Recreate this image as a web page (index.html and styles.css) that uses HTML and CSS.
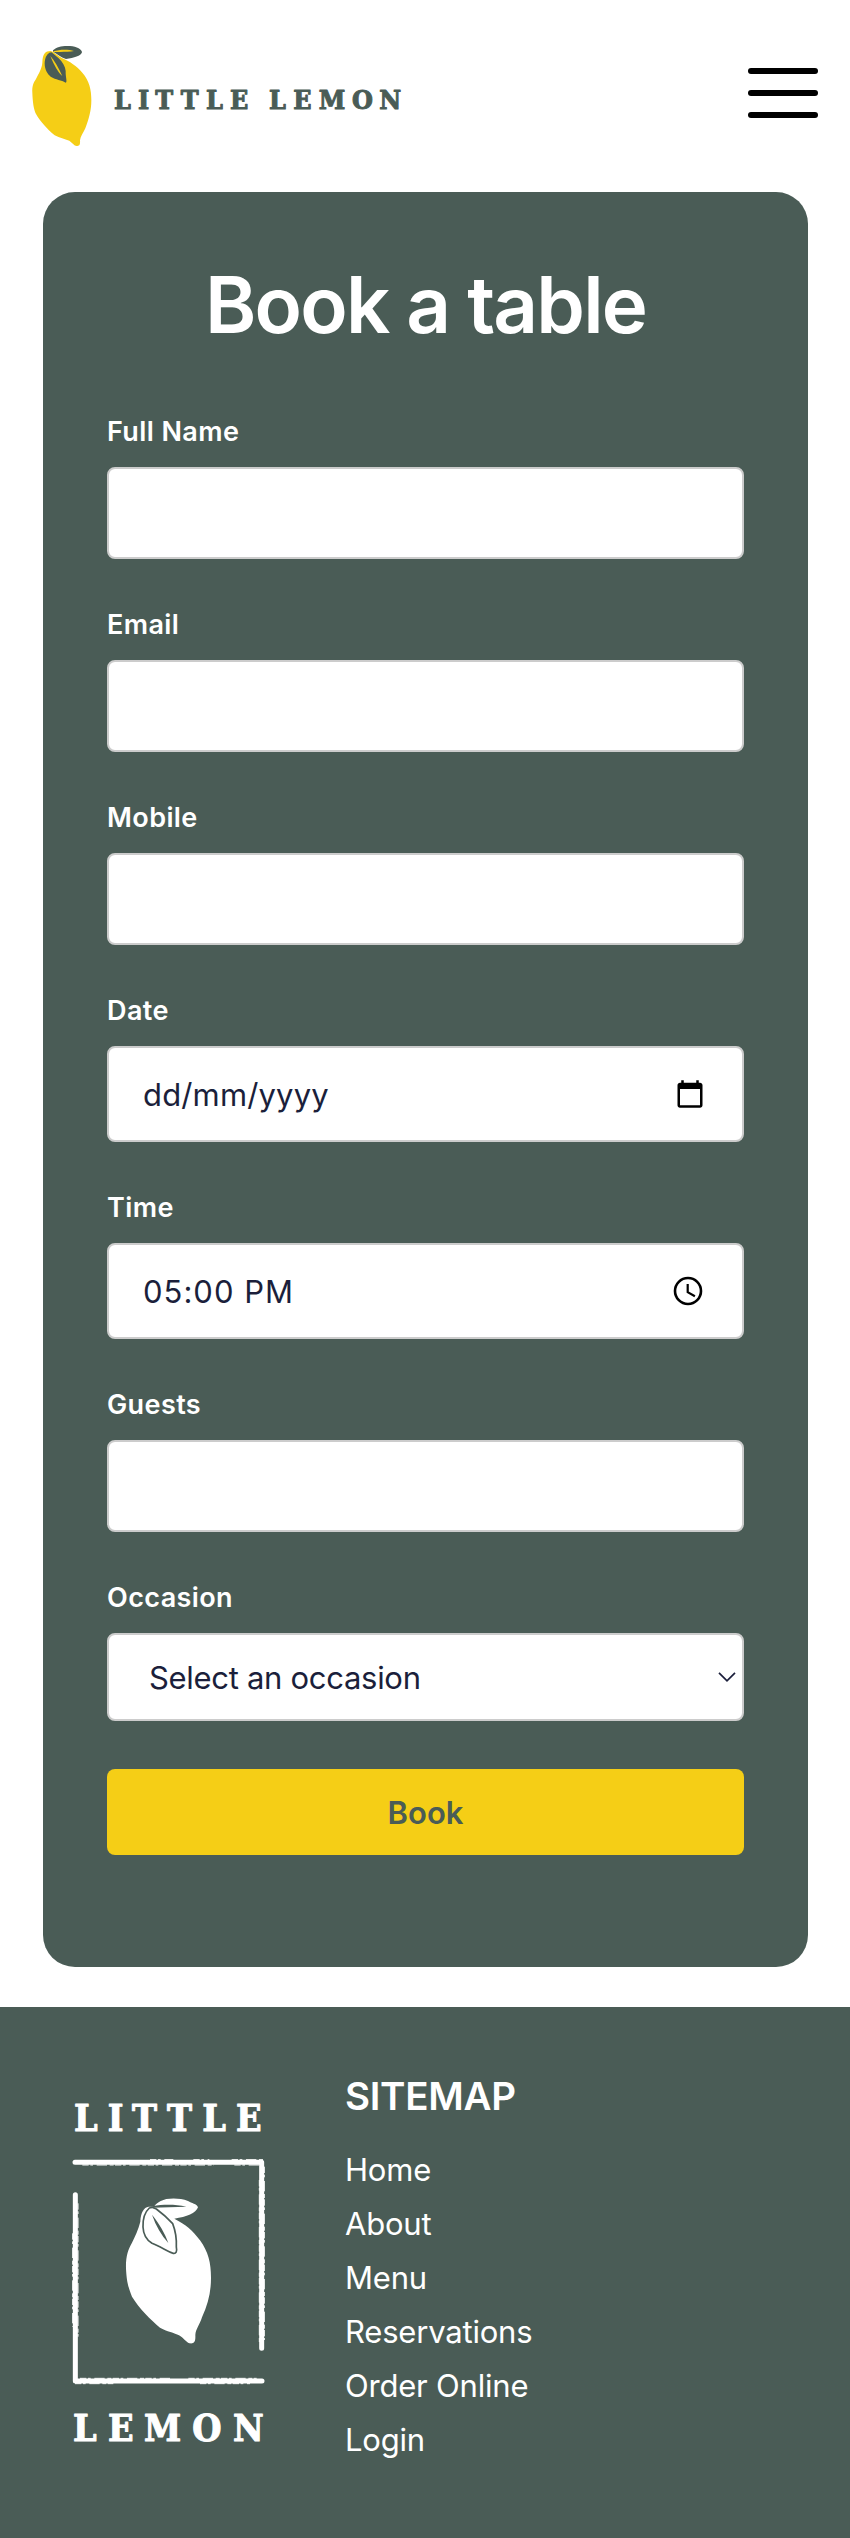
FILE: index.html
```html
<!DOCTYPE html>
<html lang="en">
<head>
<meta charset="utf-8">
<title>Little Lemon</title>
<link rel="stylesheet" href="styles.css">
</head>
<body>
<header class="header">
  <svg class="logo" viewBox="0 0 1290 450" role="img">
    <path class="yellow" d="M152 93 C136 93 128 101 127 128 C125 148 116 160 108 177 C100 188 96 199 97 218 C98 246 101 268 108 282 C120 303 142 328 164 346 C180 354 193 357 208 362 C217 368 222 377 230 378 C239 379 241 373 240 361 C241 350 250 338 256 325 C267 296 274 271 274 241 C274 207 268 183 247 158 C230 138 210 124 184 113 L158 95Z"/>
    <path class="green" d="M159 91 C172 80 185 77 210 78 C231 80 246 88 246 97 C243 108 222 114 198 117 C182 112 171 101 159 95Z"/>
    <path class="green" d="M148 98 C139 105 135 113 134 130 C134 150 143 163 152 170 C168 180 184 179 197 188 C203 188 196 168 197 153 C196 139 187 126 176 115 C166 107 158 100 155 97Z"/>
    <path class="yellow" d="M160 94 C180 87 207 88 222 93 C204 97 180 95 160 96Z M151 108 C162 119 178 148 187 168 C174 157 163 137 151 108Z"/>
    <g class="wordmark green" font-size="80">
      <text y="267" x="342 414 466 542 618 690 767 807 880 956 1056 1138">LITTLE LEMON</text>
    </g>
  </svg>
  <button class="menu" aria-label="Menu"><span class="bar"></span><span class="bar"></span><span class="bar"></span></button>
</header>
<main class="card">
  <h1 class="title">Book a table</h1>
  <form class="form">
    <div class="field"><label class="label">Full Name</label><div class="input"></div></div>
    <div class="field"><label class="label">Email</label><div class="input"></div></div>
    <div class="field"><label class="label">Mobile</label><div class="input"></div></div>
    <div class="field"><label class="label">Date</label>
      <div class="input picker"><span class="date">dd/mm/yyyy</span>
        <svg class="calendar" viewBox="0 0 24 24"><path d="M20 3h-1V1h-2v2H7V1H5v2H4c-1.1 0-2 .9-2 2v16c0 1.1.9 2 2 2h16c1.1 0 2-.9 2-2V5c0-1.1-.9-2-2-2zm0 18H4V8h16v13z"/></svg>
      </div></div>
    <div class="field"><label class="label">Time</label>
      <div class="input picker"><span class="time">05:00 PM</span>
        <svg class="clock" viewBox="0 0 30 30"><circle cx="15" cy="15" r="13"/><path d="M14.7 8v8.2l7.2 4.1"/></svg>
      </div></div>
    <div class="field"><label class="label">Guests</label><div class="input"></div></div>
    <div class="field"><label class="label">Occasion</label>
      <div class="input select"><span class="option">Select an occasion</span>
        <svg class="chevron" viewBox="0 0 18 10"><path d="M1 .8l8 8 8-8"/></svg>
      </div></div>
    <button class="submit" type="button">Book</button>
  </form>
</main>
<footer class="footer">
  <svg class="emblem" viewBox="0 0 720 1170" role="img">
    <g class="wordmark white" font-size="112">
      <text y="152" x="72 173 246 351 457 558">LITTLE</text>
      <text y="1083" x="69 174 282 427 549">LEMON</text>
    </g>
    <g class="frame"><path d="M75 247H635V805M76 344V903H636"/></g>
    <g class="rough"><path d="M97 255H490M553 255H628M300 239H370M430 239H478M545 239H640M628 300V790M643 260V780M68 460V740M84 370V770M90 895H365M415 895H620M75 911H190M450 911H600"/></g>
    <path class="white" d="M296 380C281 382 272 398 271 425C265 449 255 470 246 488C234 509 227 530 228 566C230 603 234 620 246 650C267 685 303 720 330 743C350 755 374 758 387 766C400 772 408 787 418 790C433 792 437 786 436 765C437 748 451 730 456 712C474 673 483 637 483 594C483 548 475 516 450 481C429 452 407 433 373 416C410 411 438 399 444 382C440 371 425 370 414 363C394 355 370 354 349 357C330 362 319 370 312 380Z"/>
    <g class="vein"><path d="M298 384C284 397 278 414 279 441C280 466 293 482 306 490C330 500 350 512 369 520C378 522 382 515 379 501C380 478 377 454 368 431C350 411 334 398 319 387L306 382Z"/><path class="fill" d="M306 404C327 430 345 460 355 489C334 466 318 438 306 404ZM308 379C340 373 374 373 409 380C375 382 340 381 308 383Z"/></g>
  </svg>
  <nav class="sitemap">
    <h2 class="heading">SITEMAP</h2>
    <a class="link">Home</a><a class="link">About</a><a class="link">Menu</a><a class="link">Reservations</a><a class="link">Order Online</a><a class="link">Login</a>
  </nav>
</footer>
</body>
</html>
```
FILE: styles.css
```css
* { box-sizing: border-box; }
body { margin: 0; background: #fff; font-family: Inter, "Liberation Sans", sans-serif; color: #fff; }
.header { display: flex; justify-content: space-between; align-items: flex-start; height: 192px; padding: 20px 32px 0 0; }
.logo { width: 430px; height: 150px; }
.yellow { fill: #f5ce16; }
.green { fill: #4a5c56; }
.white { fill: #fff; }
.wordmark { font-family: "DejaVu Serif Condensed", "DejaVu Serif", serif; font-stretch: condensed; font-weight: bold; stroke-width: 3; stroke-linejoin: round; }
.wordmark.green { stroke: #4a5c56; }
.wordmark.white { stroke: #fff; }
.menu { display: flex; flex-direction: column; gap: 16px; width: 70px; margin: 48px 0 0; padding: 0; border: 0; background: none; }
.bar { width: 70px; height: 6px; border-radius: 3px; background: #000; }
.card { width: 765px; height: 1775px; margin: 0 0 40px 43px; padding: 65px 64px 0; border-radius: 32px; background: #4a5c56; }
.title { margin: 0 0 62px; font-size: 78px; font-weight: 600; line-height: 96px; text-align: center; letter-spacing: -1.8px; white-space: nowrap; }
.form { display: flex; flex-direction: column; gap: 48px; }
.field { display: flex; flex-direction: column; gap: 18px; }
.label { font-size: 27px; line-height: 34px; font-weight: 600; letter-spacing: .4px; }
.field + .field .label, .field:first-child .label { margin-top: 0; }
.field + .field { padding-top: 1px; }
.input { display: flex; align-items: center; justify-content: space-between; height: 92px; border: 2px solid #ccc; border-radius: 8px; background: #fff; color: #1b1f3b; font-size: 31px; line-height: 40px; }
.input span { padding-top: 2px; }
.date { letter-spacing: .15px; }
.time { letter-spacing: 1px; }
.option { letter-spacing: -.3px; }
.picker { height: 96px; padding: 0 39px 0 34px; }
.select { height: 88px; padding: 0 6px 0 40px; }
.calendar { width: 30px; height: 30px; margin-right: -2px; fill: #000; }
.clock { width: 30px; height: 30px; fill: none; stroke: #000; stroke-width: 2.6; }
.clock path { stroke-width: 2.2; }
.chevron { width: 18px; height: 10px; fill: none; stroke: #1b1f3b; stroke-width: 1.7; }
.submit { height: 86px; padding: 2px 0 0; border: 0; border-radius: 8px; background: #f5ce16; color: #4a5c56; font: 600 31px/40px Inter, sans-serif; }
.footer { display: flex; gap: 55px; height: 531px; padding: 73px 50px 0; background: #4a5c56; }
.emblem { width: 240px; height: 390px; }
.frame { fill: none; stroke: #fff; stroke-width: 15; stroke-linecap: round; stroke-linejoin: round; }
.rough { fill: none; stroke: #fff; stroke-width: 3; stroke-dasharray: 19 5 8 11 31 8 12 4; }
.vein { fill: none; stroke: #4a5c56; stroke-width: 5; stroke-linejoin: round; }
.vein .fill { fill: #4a5c56; stroke: none; }
.sitemap { display: flex; flex-direction: column; }
.heading { margin: -8px 0 23px; font-size: 38.5px; line-height: 48px; font-weight: 600; letter-spacing: -.3px; }
.link { font-size: 31px; line-height: 54px; letter-spacing: -.2px; }
```
